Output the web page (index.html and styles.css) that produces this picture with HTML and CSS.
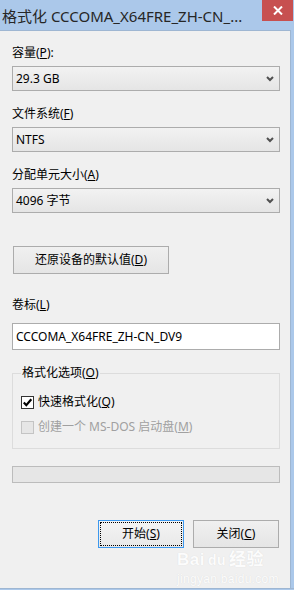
FILE: index.html
```html
<!DOCTYPE html>
<html lang="zh-CN">
<head>
<meta charset="utf-8">
<title>格式化</title>
<link rel="stylesheet" href="styles.css">
</head>
<body>
<div class="window">
  <div class="titlebar">
    <span class="title">格式化 CCCOMA_X64FRE_ZH-CN_...</span>
    <span class="close"><svg width="10" height="9" viewBox="0 0 10 9"><path d="M1 0.5 L9 8.5 M9 0.5 L1 8.5" stroke="#fff" stroke-width="2" fill="none"/></svg></span>
  </div>
  <div class="body">
    <div class="client">
      <div class="field">
        <div class="label">容量(<u>P</u>):</div>
        <div class="combo"><span>29.3 GB</span><svg class="chev" width="8" height="6" viewBox="0 0 8 6"><path d="M1 1 L4 4 L7 1" stroke="#505050" stroke-width="2" fill="none"/></svg></div>
      </div>
      <div class="field spaced">
        <div class="label">文件系统(<u>F</u>)</div>
        <div class="combo"><span>NTFS</span><svg class="chev" width="8" height="6" viewBox="0 0 8 6"><path d="M1 1 L4 4 L7 1" stroke="#505050" stroke-width="2" fill="none"/></svg></div>
      </div>
      <div class="field spaced">
        <div class="label">分配单元大小(<u>A</u>)</div>
        <div class="combo"><span>4096 字节</span><svg class="chev" width="8" height="6" viewBox="0 0 8 6"><path d="M1 1 L4 4 L7 1" stroke="#505050" stroke-width="2" fill="none"/></svg></div>
      </div>
      <button class="btn restore">还原设备的默认值(<u>D</u>)</button>
      <div class="field volume">
        <div class="label">卷标(<u>L</u>)</div>
        <div class="textbox">CCCOMA_X64FRE_ZH-CN_DV9</div>
      </div>
      <fieldset class="group">
        <legend>格式化选项(<u>O</u>)</legend>
        <div class="check"><span class="box"><svg width="11" height="11" viewBox="0 0 11 11"><path d="M1.8 5.6 L4.3 8.2 L9.3 2.2" stroke="#000" stroke-width="2.2" fill="none"/></svg></span><span class="check-text">快速格式化(<u>Q</u>)</span></div>
        <div class="check disabled"><span class="box"></span><span class="check-text">创建一个 MS-DOS 启动盘(<u>M</u>)</span></div>
      </fieldset>
      <div class="progress"></div>
      <div class="actions">
        <button class="btn default">开始(<u>S</u>)</button>
        <button class="btn">关闭(<u>C</u>)</button>
      </div>
      <div class="watermark">
        <div class="wm-logo">Bai<span class="wm-paw">du</span>经验</div>
        <div class="wm-url">jingyan.baidu.com</div>
      </div>
    </div>
    <div class="frame-right"></div>
  </div>
  <div class="frame-bottom"></div>
</div>
</body>
</html>
```

FILE: styles.css
```css
* { box-sizing: border-box; }
html, body { margin: 0; padding: 0; }
body {
  width: 294px;
  height: 590px;
  overflow: hidden;
  font-family: "Noto Sans", "Noto Sans CJK SC", sans-serif;
  font-size: 12px;
  color: #000;
}
.window {
  width: 294px;
  height: 590px;
  display: flex;
  flex-direction: column;
  background: #abc8ea;
}
.titlebar {
  height: 30px;
  display: flex;
  align-items: flex-start;
  justify-content: space-between;
  flex: none;
}
.title {
  font-size: 15px;
  line-height: 20px;
  padding: 6px 0 0 2px;
  color: #262626;
  white-space: nowrap;
}
.close {
  width: 31px;
  height: 21px;
  margin-right: 1px;
  background: #c75050;
  display: flex;
  align-items: center;
  justify-content: center;
}
.body {
  flex: 1;
  display: flex;
  min-height: 0;
}
.client {
  position: relative;
  width: 291px;
  background: #f0f0f0;
  border-top: 1px solid #9eb6d2;
  border-right: 1px solid #9eb6d2;
  padding: 14px 11px 0 12px;
  display: flex;
  flex-direction: column;
}
.frame-right { flex: 1; }
.frame-bottom {
  height: 2px;
  flex: none;
  border-top: 1px solid #9eb6d2;
}
u { text-decoration: underline; text-underline-offset: 1px; }
.field {
  display: flex;
  flex-direction: column;
  gap: 5px;
}
.field.spaced { margin-top: 15px; }
.label {
  line-height: 16px;
  height: 16px;
  white-space: nowrap;
}
.combo {
  height: 25px;
  width: 268px;
  border: 1px solid #acacac;
  background: linear-gradient(#f2f2f2, #e5e5e5);
  display: flex;
  align-items: center;
  justify-content: space-between;
  padding: 0 5px 0 3px;
  line-height: 16px;
}
.chev { display: block; }
.btn {
  font-family: inherit;
  font-size: 12px;
  color: #000;
  height: 28px;
  border: 1px solid #acacac;
  background: linear-gradient(#f0f0f0, #e5e5e5);
  padding: 0;
  margin: 0;
  line-height: 16px;
  position: relative;
}
.restore {
  width: 156px;
  margin-top: 33px;
  margin-left: 1px;
}
.volume { margin-top: 23px; gap: 10px; }
.textbox {
  width: 268px;
  height: 27px;
  background: #fff;
  border: 1px solid #acacac;
  padding: 0 3px;
  line-height: 25px;
}
.group {
  margin: 15px 0 0 0;
  width: 268px;
  border: 1px solid #dcdcdc;
  padding: 13px 8px 13px 8px;
  display: flex;
  flex-direction: column;
  gap: 9px;
}
.group legend {
  padding: 0 1px;
  line-height: 16px;
}
.check {
  display: flex;
  align-items: center;
  gap: 4px;
  line-height: 16px;
  height: 16px;
  white-space: nowrap;
}
.box {
  width: 13px;
  height: 13px;
  border: 1px solid #333;
  background: #fff;
  display: flex;
  align-items: center;
  justify-content: center;
  flex: none;
}
.check.disabled { color: #a0a0a0; }
.check.disabled .box {
  border-color: #c4c4c4;
  background: #e6e6e6;
}
.progress {
  margin-top: 17px;
  width: 268px;
  height: 17px;
  background: #e6e6e6;
  border: 1px solid #bcbcbc;
}
.actions {
  margin-top: 37px;
  display: flex;
  justify-content: flex-end;
  gap: 9px;
}
.actions .btn { width: 86px; }
.btn.default {
  border-color: #3c98ee;
  background: linear-gradient(#f4f4f4, #e8e8e8);
}
.btn.default::after {
  content: "";
  position: absolute;
  inset: 1px;
  border: 1px dotted #000;
}
.watermark {
  position: absolute;
  left: 177px;
  top: 519px;
  color: #fcfcfc;
  text-shadow: 0 0 1px #d6d6d6;
  pointer-events: none;
}
.wm-logo {
  font-family: "Liberation Sans", "Noto Sans CJK SC", sans-serif;
  font-weight: bold;
  font-size: 17px;
  line-height: 20px;
  letter-spacing: 0.5px;
}
.wm-paw { font-size: 14px; margin: 0 3px; }
.wm-url {
  font-family: "Liberation Sans", sans-serif;
  font-size: 12px;
  line-height: 14px;
  margin-top: 2px;
  letter-spacing: 0.3px;
}
```
